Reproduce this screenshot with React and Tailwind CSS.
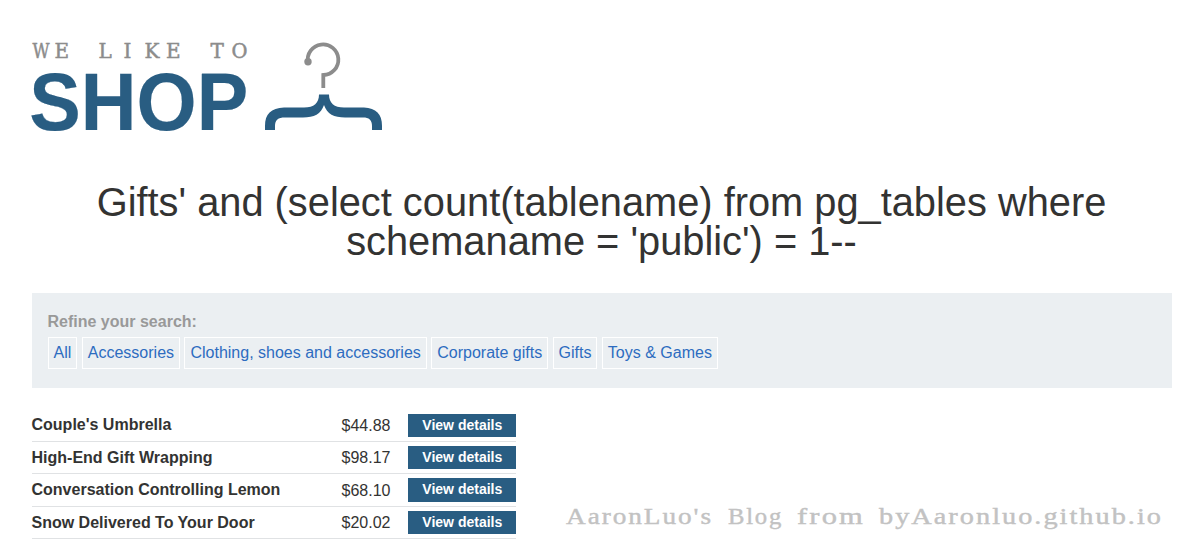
const categories = ["All", "Accessories", "Clothing, shoes and accessories", "Corporate gifts", "Gifts", "Toys & Games"];

const products = [
  { name: "Couple's Umbrella", price: "$44.88" },
  { name: "High-End Gift Wrapping", price: "$98.17" },
  { name: "Conversation Controlling Lemon", price: "$68.10" },
  { name: "Snow Delivered To Your Door", price: "$20.02" },
];

function Logo() {
  return (
    <svg className="block h-[120px] w-[364px]" viewBox="-4 0 364 120">
      <g fill="#8c8c8c" stroke="#8c8c8c" strokeWidth="0.5" fontSize="20" className="font-['DejaVu_Serif',serif]">
        <text y="23" x="0.5" textLength="17" lengthAdjust="spacingAndGlyphs">W</text>
        <text y="23" x="22.5">E</text>
        <text y="23" x="66.5 91.5 112.5 134">LIKE</text>
        <text y="23" x="178.5">T</text>
        <text y="23" x="199.5" textLength="16" lengthAdjust="spacingAndGlyphs">O</text>
      </g>
      <text x="-2.8" y="95" fontSize="81.3" fontWeight="700" fill="#295d82" stroke="#295d82" strokeWidth="0.2" textLength="219" lengthAdjust="spacingAndGlyphs" className="font-['Liberation_Sans',sans-serif]">SHOP</text>
      <path d="M276 27A15.3 15.3 0 1 1 291.3 39.5V52.5" transform="translate(0 .5)" fill="none" stroke="#8c8c8c" strokeWidth="3.8" />
      <circle cx="276" cy="26.8" r="3.7" fill="#8c8c8c" />
      <path d="M287 59.5H297C297 68 302 72.5 312 72.5H332C344 73 350 79 350 91V95H340V91C340 85 337 82.5 331 82.5H313C302 82.5 295 79 292 70C289 79 282 82.5 271 82.5H253C246 82.5 243 85 243 91V95H233V91C233 79 239 73 252 72.5H272C282 72.5 287 68 287 59.5Z" fill="#295d82" />
    </svg>
  );
}

function Watermark() {
  return (
    <svg className="absolute left-[560px] top-[500px] h-[36px] w-[610px]" viewBox="0 0 610 36" fill="#c2c2c2" stroke="#c2c2c2" strokeWidth="0.4" fontSize="22.5">
      <g className="font-['Liberation_Serif',serif]">
        <text x="6" y="24" textLength="147" lengthAdjust="spacingAndGlyphs" letterSpacing="1.6">AaronLuo's</text>
        <text x="168" y="24" textLength="55" lengthAdjust="spacingAndGlyphs" letterSpacing="1.6">Blog</text>
        <text x="237" y="24" textLength="68" lengthAdjust="spacingAndGlyphs" letterSpacing="1.6">from</text>
        <text x="319" y="24" textLength="284" lengthAdjust="spacingAndGlyphs" letterSpacing="1.6">byAaronluo.github.io</text>
      </g>
    </svg>
  );
}

export default function App() {
  return (
    <div className="relative h-[549px] w-[1186px] overflow-hidden bg-white font-['Liberation_Sans',sans-serif] text-base text-[#333332]">
      <header className="pl-7 pt-[35px]">
        <Logo />
      </header>
      <main className="pl-8 pr-[14px]">
        <h1 className="mt-7 pr-px text-center text-[39.8px] leading-[39px]">
          Gifts' and (select count(tablename) from pg_tables where
          <br />
          schemaname = 'public') = 1--
        </h1>
        <section className="mt-8 h-[95px] bg-[#ebeff2] pl-4 pt-[17px]">
          <p className="-ml-[0.5px] leading-6 font-bold text-[#999]">Refine your search:</p>
          <div className="mt-[3px] -ml-[0.4px] flex gap-[4.42px]">
            {categories.map((c) => (
              <a key={c} className="h-8 border border-white px-[5px] leading-[29px] whitespace-nowrap text-[#2d6cc0]">{c}</a>
            ))}
          </div>
        </section>
        <section className="mt-[21.5px] w-[484px]">
          {products.map((p) => (
            <div key={p.name} className="flex h-[32.4px] items-center border-b border-[#e0e2e4]">
              <span className="-ml-[0.5px] w-[310px] pt-[0.3px] font-bold">{p.name}</span>
              <span className="w-[66.5px] pt-[1.2px]">{p.price}</span>
              <a className="h-[23.3px] w-[108px] bg-[#295d82] pl-[0.6px] text-center text-sm leading-[23.6px] font-bold text-white">View details</a>
            </div>
          ))}
        </section>
      </main>
      <Watermark />
    </div>
  );
}
